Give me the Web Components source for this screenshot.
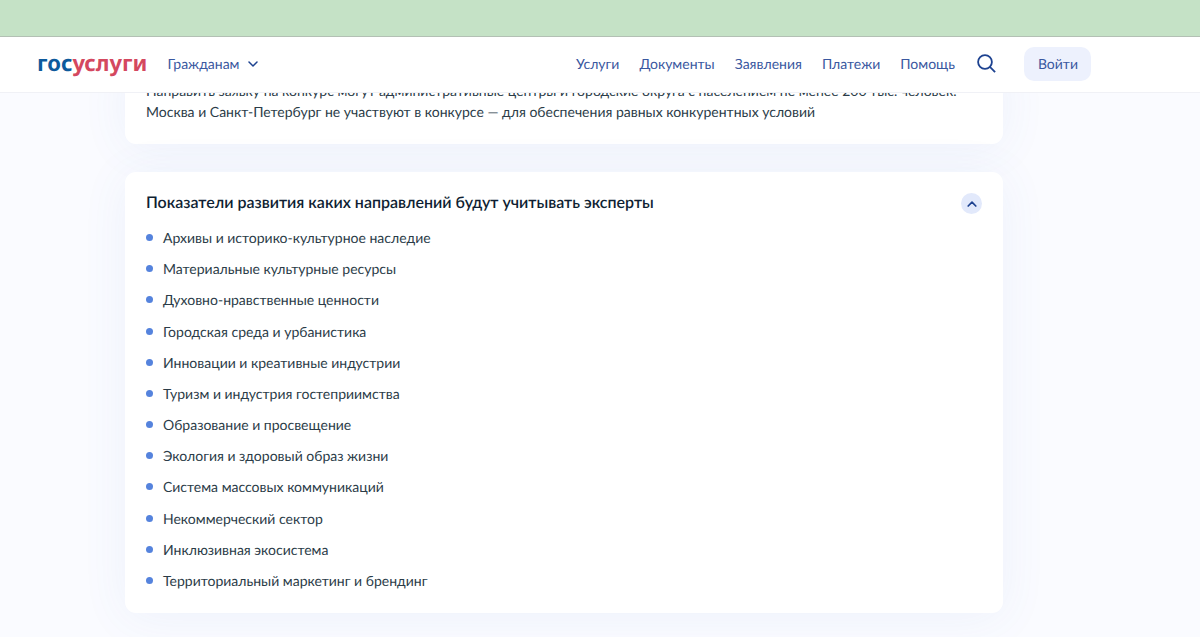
<!DOCTYPE html>
<html lang="ru">
<head>
<meta charset="utf-8">
<meta name="viewport" content="width=device-width, initial-scale=1">
<title>Госуслуги</title>
<style>
  body {
    margin: 0;
    font-family: Lato, "Open Sans", sans-serif;
    font-size: 14px;
    line-height: 21px;
    text-rendering: geometricPrecision;
    color: #2b3c48;
    background: #fafbff;
    --link: #3a58a0;
    --deep: #1d4290;
    --gutter: 72px;
  }
</style>
</head>
<body>
<portal-page>
  <portal-header slot="header"></portal-header>
  <info-card>
    <p>Направить заявку на конкурс могут административные центры и городские округа с населением не менее 200 тыс. человек. Москва и Санкт-Петербург не участвуют в конкурсе — для обеспечения равных конкурентных условий</p>
  </info-card>
  <info-card heading="Показатели развития каких направлений будут учитывать эксперты">
    <bullet-list>
      <bullet-item>Архивы и историко-культурное наследие</bullet-item>
      <bullet-item>Материальные культурные ресурсы</bullet-item>
      <bullet-item>Духовно-нравственные ценности</bullet-item>
      <bullet-item>Городская среда и урбанистика</bullet-item>
      <bullet-item>Инновации и креативные индустрии</bullet-item>
      <bullet-item>Туризм и индустрия гостеприимства</bullet-item>
      <bullet-item>Образование и просвещение</bullet-item>
      <bullet-item>Экология и здоровый образ жизни</bullet-item>
      <bullet-item>Система массовых коммуникаций</bullet-item>
      <bullet-item>Некоммерческий сектор</bullet-item>
      <bullet-item>Инклюзивная экосистема</bullet-item>
      <bullet-item>Территориальный маркетинг и брендинг</bullet-item>
    </bullet-list>
  </info-card>
</portal-page>

<script>
const define = (name, html, setup) => {
  const template = document.createElement('template');
  template.innerHTML = html;
  customElements.define(name, class extends HTMLElement {
    constructor() {
      super();
      this.attachShadow({ mode: 'open' }).append(template.content.cloneNode(true));
    }
    connectedCallback() {
      if (setup) setup(this, this.shadowRoot);
    }
  });
};

define('portal-page', `
  <style>
    :host { display: block; }
    .top { position: sticky; top: 0; z-index: 2; }
    .strip { height: 36px; background: #c5e2c6; border-bottom: 1px solid #b3c0b4; }
    main {
      display: flex;
      flex-direction: column;
      gap: 28px;
      padding: 0 calc(20px + var(--gutter)) 24px 20px;
      margin-top: -34px;
      align-items: center;
    }
    ::slotted(info-card) { width: 100%; max-width: 878px; }
  </style>
  <div class="top"><div class="strip"></div><slot name="header"></slot></div>
  <main><slot></slot></main>
`);

define('portal-logo', `
  <style>
    :host { display: block; padding-bottom: 2px; }
    a {
      font: 700 22px/28px "Noto Sans", sans-serif;
      color: #d4485f;
      text-decoration: none;
    }
    span { color: #0d5a9c; }
  </style>
  <a href="#" aria-label="госуслуги"><span>гос</span>услуги</a>
`);

define('portal-header', `
  <style>
    :host {
      display: block;
      background: #fff;
      border-bottom: 1px solid #f0f1f6;
      padding: 0 calc(20px + var(--gutter)) 2px 20px;
    }
    .row {
      display: flex;
      align-items: center;
      max-width: 1054px;
      height: 53px;
      margin: 0 auto;
    }
    portal-logo { margin-right: 20px; }
    nav { display: flex; gap: 20px; margin-left: auto; }
    a { color: var(--link); text-decoration: none; }
    button {
      font: inherit;
      text-rendering: inherit;
      color: var(--link);
      border: 0;
      padding: 0;
      background: none;
      cursor: pointer;
    }
    svg { display: block; fill: none; stroke: var(--deep); }
    .audience { display: flex; align-items: center; gap: 9px; }
    .search { margin: 0 28px 0 22px; }
    .login {
      padding: 6px 13px 7px 14px;
      border-radius: 10px;
      background: #edf1fd;
      line-height: 21px;
    }
  </style>
  <header class="row">
    <portal-logo></portal-logo>
    <button class="audience" type="button">Гражданам
      <svg width="10" height="6" viewBox="0 0 10 6" stroke-width="1.5" stroke-linecap="round" stroke-linejoin="round"><path d="M1 1l4 4 4-4"/></svg>
    </button>
    <nav aria-label="Основное меню">
      <a href="#">Услуги</a><a href="#">Документы</a><a href="#">Заявления</a><a href="#">Платежи</a><a href="#">Помощь</a>
    </nav>
    <button class="search" type="button" aria-label="Поиск">
      <svg width="19" height="19" viewBox="0 0 19 19" stroke-width="1.8"><circle cx="8" cy="8" r="6.9"/><path d="M12.9 12.9l5.2 5.2"/></svg>
    </button>
    <button class="login" type="button">Войти</button>
  </header>
`);

define('info-card', `
  <style>
    :host {
      display: block;
      box-sizing: border-box;
      padding: 21px 21px 22px;
      border-radius: 11px;
      background: #fff;
      box-shadow: 0 4px 48px rgba(70, 110, 200, .07);
    }
    .head { display: flex; align-items: flex-start; justify-content: space-between; margin-bottom: 13px; }
    .head[hidden] { display: none; }
    h2 { margin: 0; font-size: 16px; line-height: 20px; font-weight: 600; color: #0f1f33; }
    button {
      display: grid;
      place-items: center;
      width: 21px;
      height: 21px;
      padding: 0;
      border: 0;
      border-radius: 50%;
      background: #e2e9fb;
      cursor: pointer;
    }
    ::slotted(p) { margin: 0; }
  </style>
  <div class="head">
    <h2></h2>
    <button type="button" aria-label="Свернуть" aria-expanded="true">
      <svg width="10" height="6" viewBox="0 0 10 6" fill="none" stroke="#1d4290" stroke-width="1.7" stroke-linecap="round" stroke-linejoin="round"><path d="M1.2 5L5 1.2 8.8 5"/></svg>
    </button>
  </div>
  <slot></slot>
`, (host, root) => {
  const heading = host.getAttribute('heading');
  root.querySelector('.head').hidden = !heading;
  root.querySelector('h2').textContent = heading || '';
});

define('bullet-list', `
  <style>:host { display: grid; align-content: space-between; min-height: 364px; }</style>
  <slot></slot>
`, host => host.setAttribute('role', 'list'));

define('bullet-item', `
  <style>
    :host { display: flex; align-items: center; gap: 10px; }
    i { flex: none; width: 7px; height: 7px; border-radius: 50%; background: #5583dd; }
  </style>
  <i></i><span><slot></slot></span>
`, host => host.setAttribute('role', 'listitem'));
</script>
</body>
</html>
